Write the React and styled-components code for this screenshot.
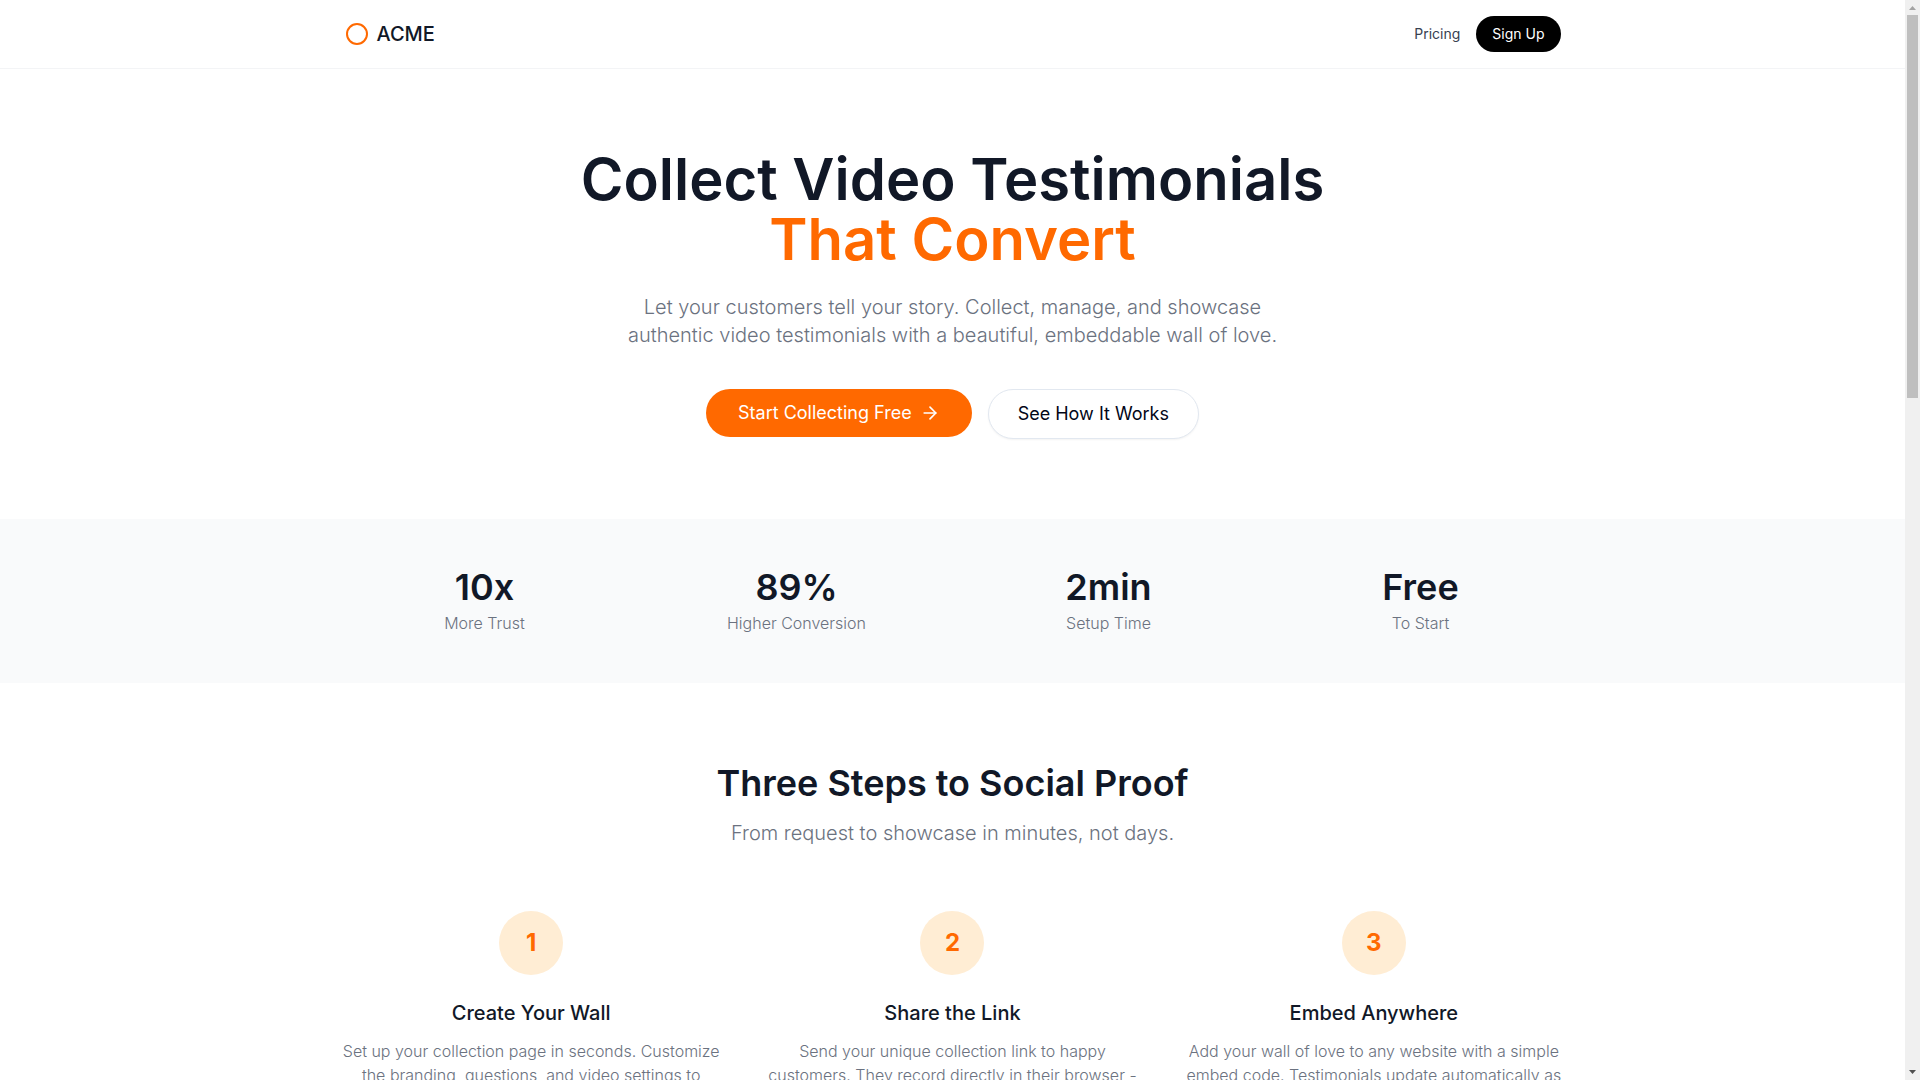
import React from "react";
import styled, { createGlobalStyle } from "styled-components";
import { ArrowRight } from "lucide-react";


const GlobalStyle = createGlobalStyle`
  * {
    box-sizing: border-box;
  }
  body {
    margin: 0;
    background: #fff;
    color: #0f172a;
    font-family: Inter, "Open Sans", sans-serif;
    font-size: 16px;
    line-height: 24px;
  }
  h1, h2, h3, p {
    margin: 0;
  }
`

const Shell = styled.div`
  display: flex;
  height: 100vh;
  overflow: hidden;
`

const Page = styled.div`
  flex: 1;
  min-width: 0;
  overflow: hidden;
`

const Container = styled.div`
  max-width: 1280px;
  margin: 0 auto;
  padding: 0 32px;
`

const Header = styled.header`
  border-bottom: 1px solid #f3f4f6;
`

const Bar = styled(Container)`
  display: flex;
  align-items: center;
  justify-content: space-between;
  height: 68px;
`

const Brand = styled.a`
  display: flex;
  align-items: center;
  gap: 8px;
  color: #111827;
  font-size: 20px;
  font-weight: 500;
  line-height: 28px;
  text-decoration: none;
`

const Nav = styled.nav`
  display: flex;
  align-items: center;
  gap: 16px;
`

const NavLink = styled.a`
  color: #374151;
  font-size: 14px;
  line-height: 20px;
  text-decoration: none;
`

const Button = styled.button`
  display: inline-flex;
  align-items: center;
  justify-content: center;
  gap: 8px;
  height: ${p => (p.$small ? 36 : 48)}px;
  padding: 0 ${p => (p.$small ? 16 : 32)}px;
  border: 0;
  border-radius: 24px;
  background: ${p => (p.$small ? "#000" : "#ff6900")};
  color: #fff;
  font-family: inherit;
  font-size: ${p => (p.$small ? 14 : 18)}px;
  font-weight: 400;
  line-height: 28px;
  white-space: nowrap;
  cursor: pointer;
`

const OutlineButton = styled(Button)`
  height: 50px;
  padding: 0 29px;
  border: 1px solid #e2e8f0;
  border-radius: 25px;
  background: #fff;
  color: #020617;
  box-shadow: 0 1px 2px rgba(0, 0, 0, 0.05);
`

const Hero = styled.section`
  padding: 80px 0;
  text-align: center;
`

const HeroTitle = styled.h1`
  color: #111827;
  font-size: 58px;
  font-weight: 600;
  line-height: 60px;

  span {
    display: block;
    color: #ff6900;
  }
`

const Lead = styled.p`
  color: #6b7280;
  font-size: 20px;
  font-weight: 300;
  line-height: 28px;
`

const HeroLead = styled(Lead)`
  max-width: 672px;
  margin: 24px auto 40px;
`

const Actions = styled.div`
  display: flex;
  align-items: flex-start;
  justify-content: center;
  gap: 16px;
`

const Stats = styled.section`
  padding: 48px 0;
  background: #f9fafb;
`

const StatGrid = styled(Container)`
  display: grid;
  grid-template-columns: repeat(4, 1fr);
  gap: 32px;
  text-align: center;
`

const StatValue = styled.p`
  color: #111827;
  font-size: 36px;
  font-weight: 600;
  line-height: 40px;
`

const StatLabel = styled.p`
  margin-top: 4px;
  color: #6b7280;
  font-weight: 300;
`

const Steps = styled.section`
  padding: 80px 0;
  text-align: center;
`

const SectionTitle = styled.h2`
  margin-bottom: 16px;
  color: #111827;
  font-size: 36px;
  font-weight: 600;
  line-height: 40px;
`

const StepGrid = styled.div`
  display: grid;
  grid-template-columns: repeat(3, 1fr);
  gap: 48px;
  margin-top: 64px;
`

const StepNumber = styled.div`
  display: flex;
  align-items: center;
  justify-content: center;
  width: 64px;
  height: 64px;
  margin: 0 auto 24px;
  border-radius: 50%;
  background: #ffedd4;
  color: #ff6900;
  font-size: 24px;
  font-weight: 700;
`

const StepTitle = styled.h3`
  margin-bottom: 12px;
  color: #111827;
  font-size: 20px;
  font-weight: 500;
  line-height: 28px;
`

const StepText = styled.p`
  margin: 0 -16px;
  color: #6b7280;
  font-weight: 300;
`

const ScrollTrack = styled.div`
  display: flex;
  flex-direction: column;
  align-items: center;
  width: 15px;
  background: #f0f0f0;
`

const ScrollThumb = styled.div`
  width: 11px;
  height: 383px;
  margin: 5px 0 auto;
  background: #bfbfbf;
`

const ScrollArrow = styled.svg`
  display: block;
  width: 7px;
  height: 4px;
  margin: ${p => (p.$down ? "0 0 6px" : "6px 0 0")};
  fill: ${p => (p.$down ? "#505050" : "#a3a3a3")};
`

const stats = [
  { value: "10x", label: "More Trust" },
  { value: "89%", label: "Higher Conversion" },
  { value: "2min", label: "Setup Time" },
  { value: "Free", label: "To Start" },
]

const steps = [
  {
    title: "Create Your Wall",
    lines: ["Set up your collection page in seconds. Customize", "the branding, questions, and video settings to"],
  },
  {
    title: "Share the Link",
    lines: ["Send your unique collection link to happy", "customers. They record directly in their browser -"],
  },
  {
    title: "Embed Anywhere",
    lines: ["Add your wall of love to any website with a simple", "embed code. Testimonials update automatically as"],
  },
]

function Logo() {
  return (
    <svg width="24" height="24" viewBox="0 0 24 24" fill="none" stroke="#ff6900" strokeWidth="2" aria-hidden="true">
      <circle cx="12" cy="12" r="10" />
    </svg>
  )
}

export default function App() {
  return (
    <Shell>
      <GlobalStyle />
      <Page>
        <Header>
          <Bar>
            <Brand href="#"><Logo />ACME</Brand>
            <Nav>
              <NavLink href="#pricing">Pricing</NavLink>
              <Button $small>Sign Up</Button>
            </Nav>
          </Bar>
        </Header>
        <Hero>
          <Container>
            <HeroTitle>Collect Video Testimonials <span>That Convert</span></HeroTitle>
            <HeroLead>
              Let your customers tell your story. Collect, manage, and showcase
              authentic video testimonials with a beautiful, embeddable wall of love.
            </HeroLead>
            <Actions>
              <Button>Start Collecting Free <ArrowRight size={20} /></Button>
              <OutlineButton>See How It Works</OutlineButton>
            </Actions>
          </Container>
        </Hero>
        <Stats>
          <StatGrid>
            {stats.map(v => (
              <div key={v.label}>
                <StatValue>{v.value}</StatValue>
                <StatLabel>{v.label}</StatLabel>
              </div>
            ))}
          </StatGrid>
        </Stats>
        <Steps>
          <Container>
            <SectionTitle>Three Steps to Social Proof</SectionTitle>
            <Lead>From request to showcase in minutes, not days.</Lead>
            <StepGrid>
              {steps.map((v, i) => (
                <div key={v.title}>
                  <StepNumber>{i + 1}</StepNumber>
                  <StepTitle>{v.title}</StepTitle>
                  <StepText>{v.lines[0]}<br />{v.lines[1]}</StepText>
                </div>
              ))}
            </StepGrid>
          </Container>
        </Steps>
      </Page>
      <ScrollTrack aria-hidden="true">
        <ScrollArrow viewBox="0 0 7 4"><path d="M0 4h7L3.5 0z" /></ScrollArrow>
        <ScrollThumb />
        <ScrollArrow $down viewBox="0 0 7 4"><path d="M0 0h7L3.5 4z" /></ScrollArrow>
      </ScrollTrack>
    </Shell>
  )
}
